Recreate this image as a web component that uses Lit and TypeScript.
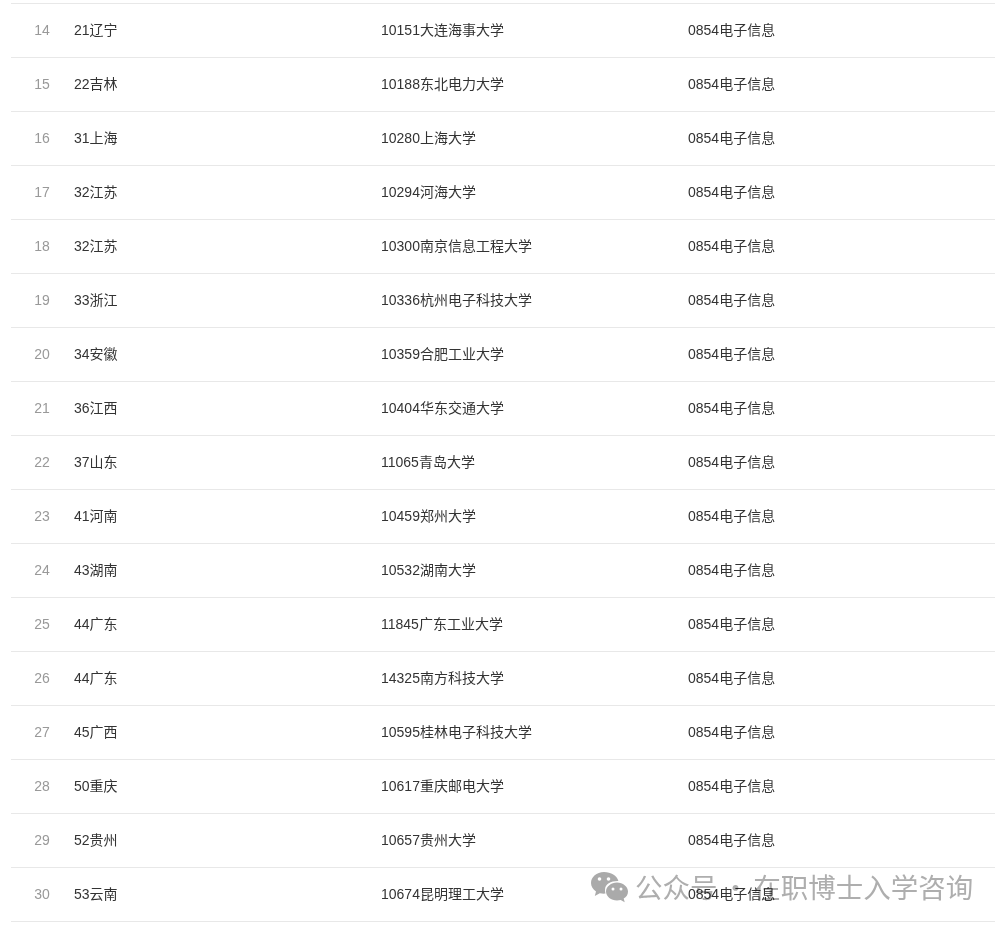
import { LitElement, html, css } from "lit";
import { customElement } from "lit/decorators.js";

const rows: [number, string, string][] = [
  [14, "21辽宁", "10151大连海事大学"],
  [15, "22吉林", "10188东北电力大学"],
  [16, "31上海", "10280上海大学"],
  [17, "32江苏", "10294河海大学"],
  [18, "32江苏", "10300南京信息工程大学"],
  [19, "33浙江", "10336杭州电子科技大学"],
  [20, "34安徽", "10359合肥工业大学"],
  [21, "36江西", "10404华东交通大学"],
  [22, "37山东", "11065青岛大学"],
  [23, "41河南", "10459郑州大学"],
  [24, "43湖南", "10532湖南大学"],
  [25, "44广东", "11845广东工业大学"],
  [26, "44广东", "14325南方科技大学"],
  [27, "45广西", "10595桂林电子科技大学"],
  [28, "50重庆", "10617重庆邮电大学"],
  [29, "52贵州", "10657贵州大学"],
  [30, "53云南", "10674昆明理工大学"],
];

@customElement("app-root")
export class AppRoot extends LitElement {
  static styles = css`
    :host {
      display: block;
      position: relative;
      width: 1006px;
      height: 928px;
      overflow: hidden;
      background: #fff;
      font-family: "Liberation Sans", "Noto Sans CJK SC", sans-serif;
      font-size: 14px;
      color: #333;
    }
    .table {
      margin: 3px 11px 0 11px;
      border-top: 1px solid #e8e8e8;
    }
    .row {
      display: grid;
      grid-template-columns: 63px 307px 307px 1fr;
      box-sizing: content-box;
      height: 37px;
      padding-top: 16px;
      line-height: 20px;
      align-items: baseline;
      border-bottom: 1px solid #e8e8e8;
    }
    .idx {
      text-align: center;
      color: #999;
      padding-right: 1px;
    }
    .wm {
      position: absolute;
      left: 590px;
      top: 868px;
      display: flex;
      align-items: center;
      gap: 6px;
      color: #aeaeae;
      font-size: 27.5px;
      line-height: 36px;
      white-space: nowrap;
      mix-blend-mode: multiply;
    }
    .wm svg { width: 39px; height: 32px; flex: none; }
    .wm span {
      font-family: "Noto Sans CJK SC", sans-serif;
      word-spacing: -2px;
      margin-bottom: 4px;
    }
  `;

  render() {
    return html`
      <div class="table">
        ${rows.map(
          (r) => html`<div class="row">
            <div class="idx">${r[0]}</div>
            <div>${r[1]}</div>
            <div>${r[2]}</div>
            <div>0854电子信息</div>
          </div>`
        )}
      </div>
      <div class="wm">
        <svg viewBox="0 0 39 32">
          <path fill="#aaa" d="M14 0C6.500 0 1 5 1 11c0 3.500 2 6.400 5 8.500L4.800 24l5-2.800c1.200.3 2.800.5 4.200.5.500 0 1 0 1.500-.1-.4-1.200-.5-2.300-.5-3.600 0-6.200 5.700-9 12.800-9h0.600C27 3.500 21 0 14 0z"/>
          <path fill="#aaa" d="M38 19.500c0-5-5.200-9-11-9s-11 4-11 9 5.200 9 11 9c1.300 0 2.500-.2 3.700-.5l4 2.300-1-3.700C36.300 25.300 38 22.500 38 19.500z"/>
          <circle cx="9.500" cy="7" r="1.800" fill="#fff"/><circle cx="18.500" cy="7" r="1.800" fill="#fff"/>
          <circle cx="23" cy="17" r="1.500" fill="#fff"/><circle cx="31" cy="17" r="1.500" fill="#fff"/>
        </svg>
        <span>公众号 · 在职博士入学咨询</span>
      </div>
    `;
  }
}
